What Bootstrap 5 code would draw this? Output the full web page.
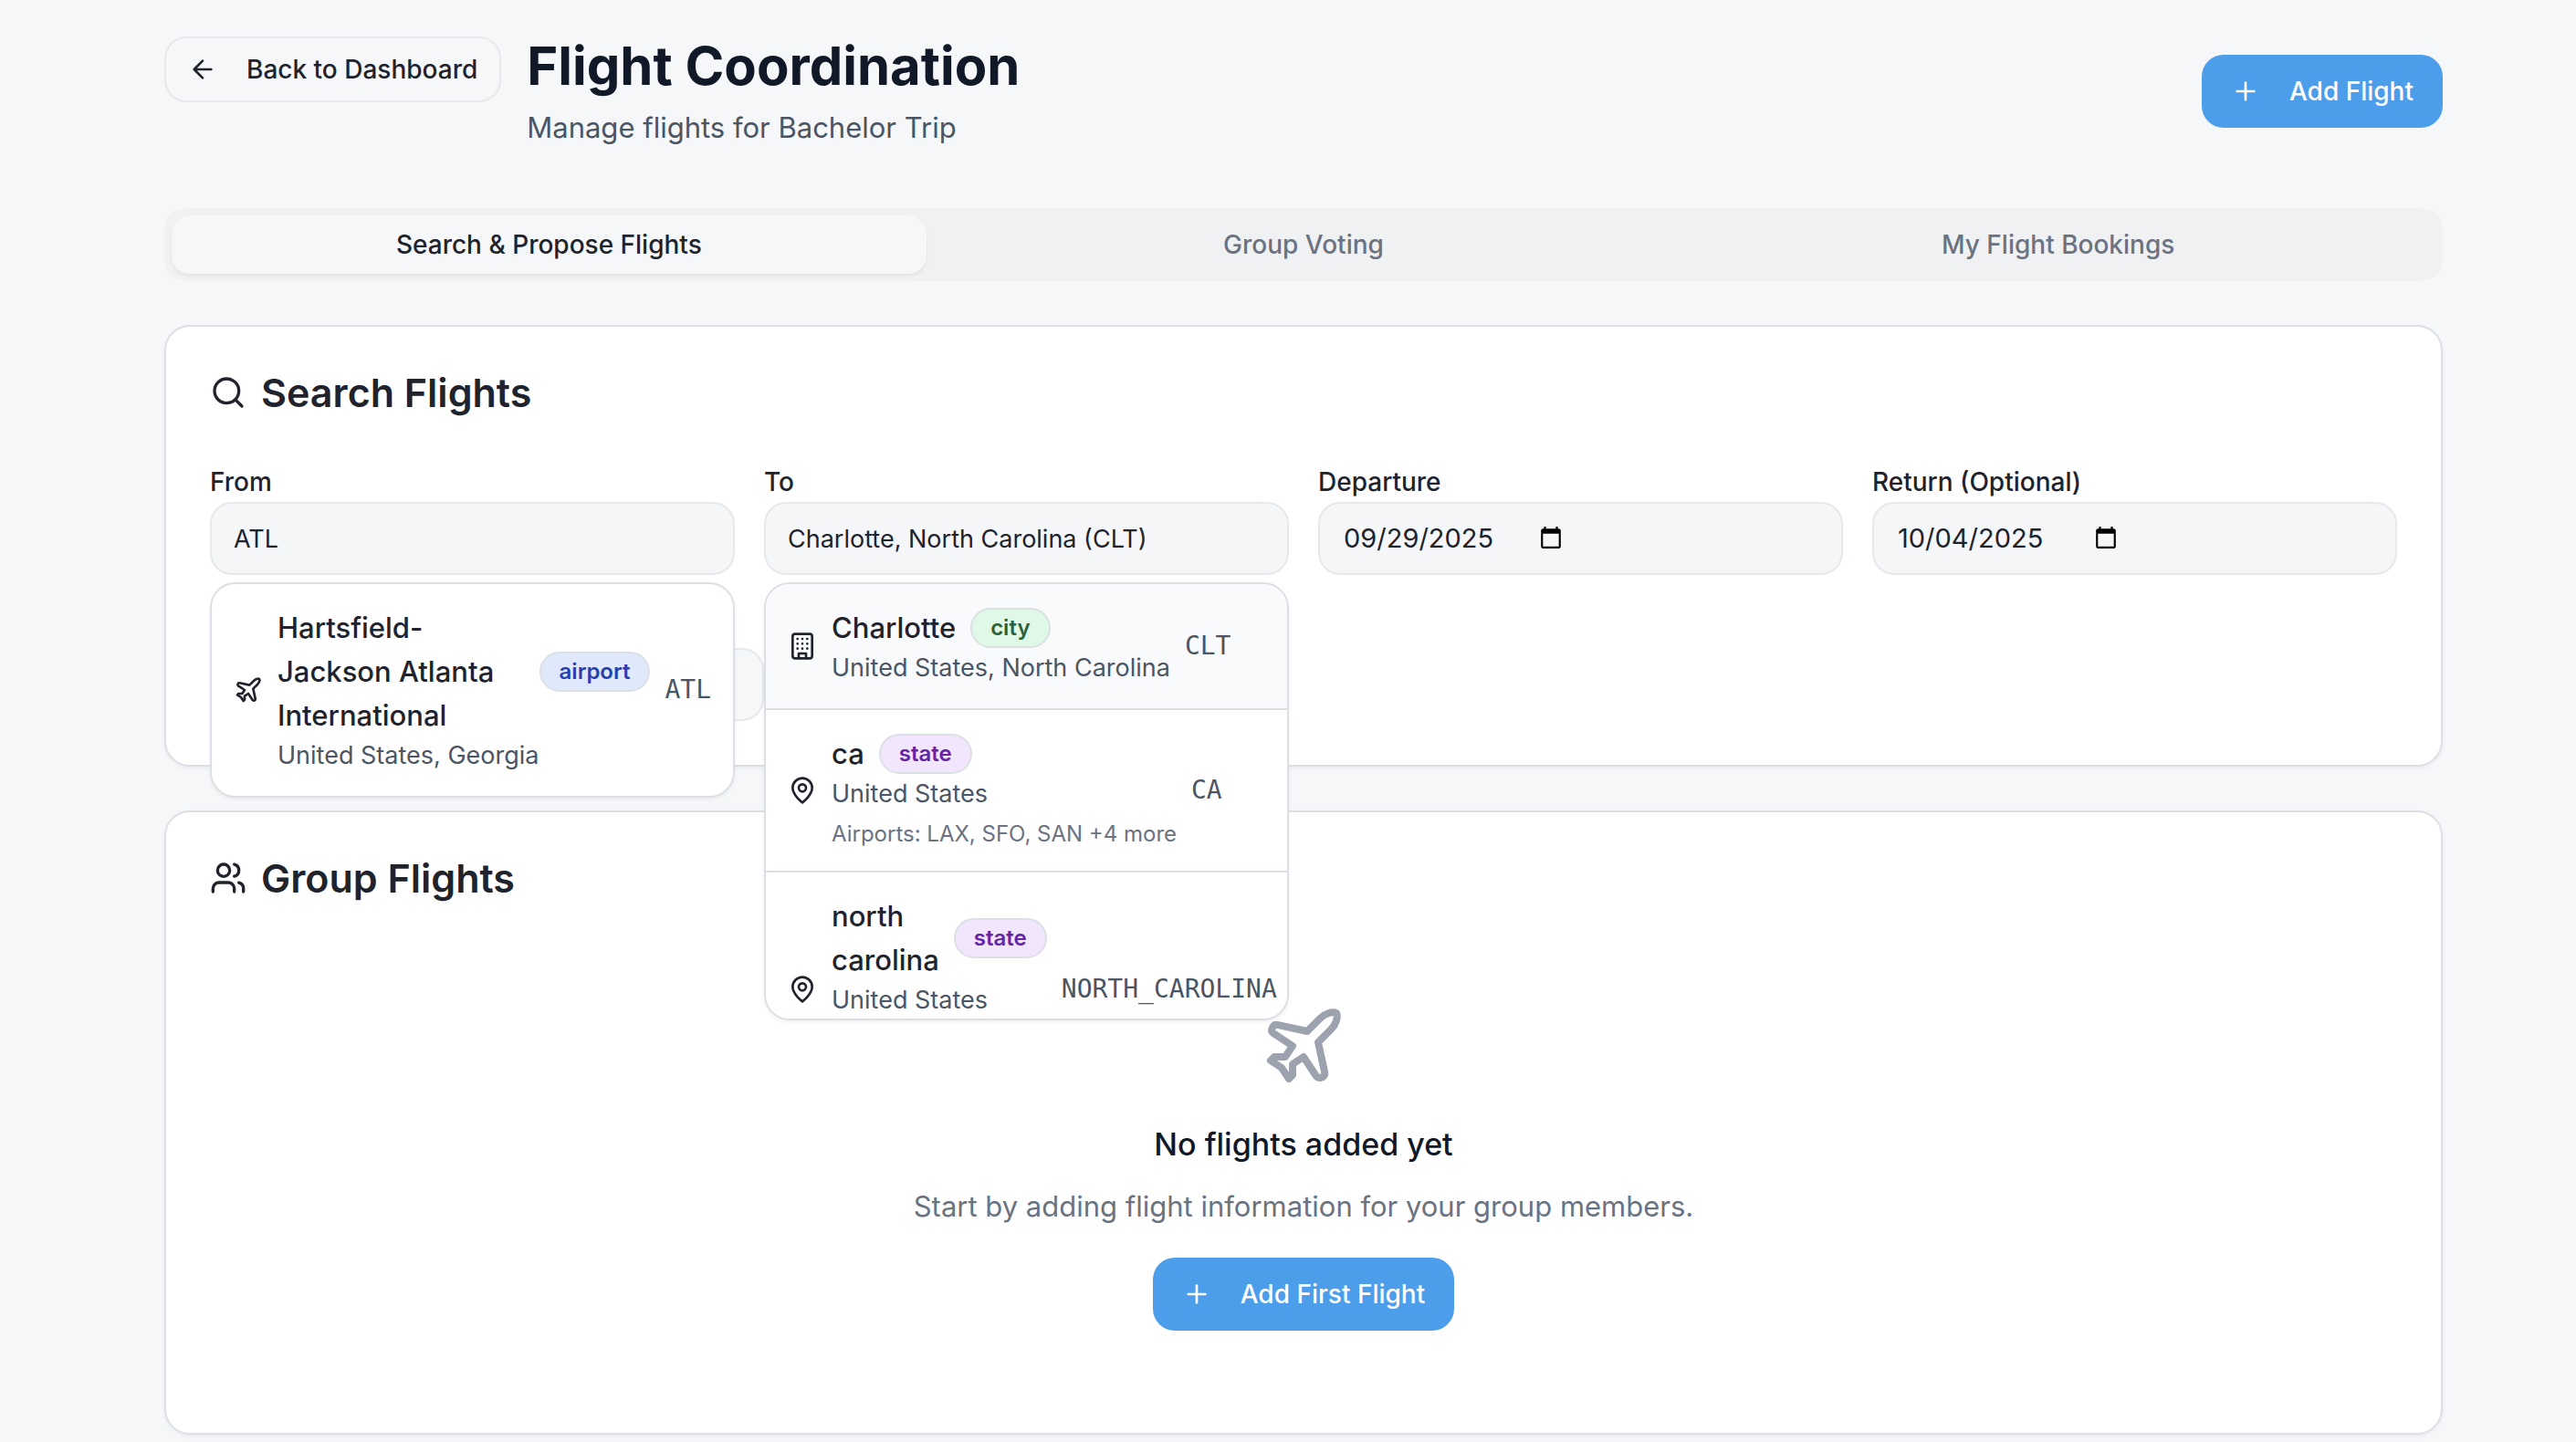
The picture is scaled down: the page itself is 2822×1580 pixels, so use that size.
<!DOCTYPE html>
<html lang="en">
<head>
<meta charset="utf-8">
<meta name="viewport" content="width=device-width, initial-scale=1">
<title>Flight Coordination</title>
<link href="https://cdn.jsdelivr.net/npm/bootstrap@5.3.0/dist/css/bootstrap.min.css" rel="stylesheet">
<style>
  :root { --line: #dcdfe5; --line-soft: #e6e8eb; --page: #f5f7f9; --ink: #20232c; --ink-strong: #111827; --ink-mid: #4b5563; --ink-soft: #6b7280; --brand: #4c9dea; }
  body { font-family: Inter, "Liberation Sans", sans-serif; font-size: 31px; line-height: 48px; color: var(--ink); background: var(--page); }
  .page { padding: 36px 146px 8px 180px; }
  .stack { gap: 48px; }
  .icon { width: 32px; height: 32px; flex: none; fill: none; stroke: currentColor; stroke-width: 2; stroke-linecap: round; stroke-linejoin: round; }
  .icon-md { width: 40px; height: 40px; }
  .icon-xl { width: 96px; height: 96px; color: #9ca3af; }
  .action { display: inline-flex; align-items: center; justify-content: center; gap: 32px; height: 80px; padding: 0 32px; font-size: 28px; font-weight: 500; line-height: 40px; border-radius: 24px; border: 0; white-space: nowrap; }
  .action-main, .action-main:hover { background: var(--brand); color: #fff; }
  .action-line { background: var(--page); color: var(--ink); border: 2px solid var(--line-soft); }
  .action-sm { height: 72px; padding: 0 24px; margin-top: 4px; }
  .action-find { width: calc(25% + 8px); margin-top: 80px; }
  .page-title { font-size: 58px; line-height: 72px; font-weight: 700; color: var(--ink-strong); }
  .head-gap { gap: 28px; }
  .header-wrap { margin-bottom: 64px; }
  .page-sub { color: var(--ink-mid); }
  .tabs-bar { background: #f0f1f3; border-radius: 24px; padding: 8px; }
  .tabs-bar .nav-link { height: 64px; padding: 0; border: 0; background: transparent; font-size: 28px; font-weight: 500; line-height: 64px; color: var(--ink-soft); border-radius: 20px; }
  .tabs-bar .nav-link.active { background: #f6f7f9; color: var(--ink); box-shadow: 0 2px 4px rgba(0,0,0,.06); }
  .panel { background: #fff; border: 2px solid var(--line); border-radius: 28px; padding: 48px; box-shadow: 0 2px 4px rgba(0,0,0,.05); }
  .panel-title { font-size: 43px; line-height: 48px; font-weight: 600; gap: 16px; margin-bottom: 48px; }
  .fields { --bs-gutter-x: 32px; --bs-gutter-y: 0; }
  .field-label { display: block; font-size: 28px; font-weight: 500; line-height: 44px; padding-top: 4px; }
  .field-box.form-control { height: 80px; padding: 0 24px; font-size: 27px; line-height: 40px; color: var(--ink); background: #f5f6f8; border: 2px solid var(--line-soft); border-radius: 24px; }
  .field-date.form-control { display: flex; align-items: center; padding: 0 26px; font-size: 29px; }
  .field-date::-webkit-calendar-picker-indicator { width: 28px; height: 28px; margin-left: -5px; padding: 0; color: #000; }
  .field-date::-webkit-datetime-edit { flex: none; }
  .suggest { top: 100%; left: 0; right: 0; margin-top: 8px; max-height: 480px; overflow: hidden; z-index: 10; background: #fff; border: 2px solid var(--line); border-radius: 28px; box-shadow: 0 2px 4px rgba(0,0,0,.06); }
  .option { display: flex; align-items: center; gap: 16px; padding: 24px; border-bottom: 2px solid var(--line); }
  .option:last-child { border-bottom: 0; }
  .option-on { background: #f9fafb; }
  .option-head { display: flex; align-items: center; gap: 16px; font-weight: 500; }
  .option-place { font-size: 27px; line-height: 40px; color: var(--ink-mid); }
  .option-ports { font-size: 24px; line-height: 32px; margin-top: 8px; color: var(--ink-soft); }
  .option-code { font-family: "DejaVu Sans Mono", monospace; font-size: 28px; line-height: 40px; color: var(--ink-mid); }
  .tag { font-size: 24px; line-height: 40px; font-weight: 600; padding: 0 20px; border: 2px solid var(--line); border-radius: 22px; }
  .tag-airport { background: #dfe9fb; color: #2740af; }
  .tag-city { background: #e0f9e6; color: #2b6339; }
  .tag-state { background: #f1e6fc; color: #6425a3; }
  .empty { padding: 64px 0; }
  .empty-title { font-size: 34px; line-height: 56px; font-weight: 500; color: var(--ink-strong); margin: 32px 0 16px; }
  .empty-text { color: var(--ink-soft); margin-bottom: 32px; }
</style>
<script src="https://cdn.jsdelivr.net/npm/bootstrap@5.3.0/dist/js/bootstrap.bundle.min.js"></script>
</head>
<body>
<svg class="d-none" aria-hidden="true">
  <symbol id="plane" viewBox="0 0 24 24"><path d="M17.8 19.2 16 11l3.5-3.5C21 6 21.5 4 21 3c-1-.5-3 0-4.5 1.5L13 8 4.8 6.2c-.5-.1-.9.1-1.1.5l-.3.5c-.2.5-.1 1 .3 1.3L9 12l-2 3H4l-1 1 3 2 2 3 1-1v-3l3-2 3.5 5.3c.3.4.8.5 1.3.4l.5-.2c.4-.3.6-.7.5-1.2z"/></symbol>
  <symbol id="pin" viewBox="0 0 24 24"><path d="M20 10c0 6-8 12-8 12s-8-6-8-12a8 8 0 0 1 16 0Z"/><circle cx="12" cy="10" r="3"/></symbol>
  <symbol id="plus" viewBox="0 0 24 24"><path d="M5 12h14M12 5v14"/></symbol>
</svg>
<main class="page container-fluid d-flex flex-column">
  <header class="header-wrap d-flex justify-content-between align-items-center">
    <div class="d-flex align-items-start head-gap">
      <button type="button" class="btn action action-line action-sm">
        <svg class="icon" viewBox="0 0 24 24"><path d="m12 19-7-7 7-7M19 12H5"/></svg>Back to Dashboard
      </button>
      <div>
        <h1 class="page-title mb-2">Flight Coordination</h1>
        <p class="page-sub mb-0">Manage flights for Bachelor Trip</p>
      </div>
    </div>
    <button type="button" class="btn action action-main"><svg class="icon"><use href="#plus"/></svg>Add Flight</button>
  </header>

  <div class="d-flex flex-column stack">
    <div class="tabs-bar nav nav-fill nav-justified" role="tablist">
      <button type="button" class="nav-link nav-item active" role="tab" aria-selected="true">Search &amp; Propose Flights</button>
      <button type="button" class="nav-link nav-item" role="tab" aria-selected="false">Group Voting</button>
      <button type="button" class="nav-link nav-item" role="tab" aria-selected="false">My Flight Bookings</button>
    </div>

    <section class="panel">
      <h2 class="panel-title d-flex align-items-center">
        <svg class="icon icon-md" viewBox="0 0 24 24"><circle cx="11" cy="11" r="8"/><path d="m21 21-4.3-4.3"/></svg>Search Flights
      </h2>
      <div class="row fields">
        <div class="col-3">
          <label class="field-label" for="from">From</label>
          <div class="position-relative">
            <input class="form-control field-box" id="from" type="text" value="ATL">
            <div class="suggest position-absolute" role="listbox">
              <div class="option" role="option">
                <svg class="icon"><use href="#plane"/></svg>
                <div>
                  <div class="option-head"><span>Hartsfield-Jackson Atlanta International</span><span class="tag tag-airport">airport</span></div>
                  <div class="option-place">United States, Georgia</div>
                </div>
                <div class="option-code">ATL</div>
              </div>
            </div>
          </div>
        </div>
        <div class="col-3">
          <label class="field-label" for="to">To</label>
          <div class="position-relative">
            <input class="form-control field-box" id="to" type="text" value="Charlotte, North Carolina (CLT)">
            <div class="suggest position-absolute" role="listbox">
              <div class="option option-on" role="option">
                <svg class="icon" viewBox="0 0 24 24"><rect x="4" y="2" width="16" height="20" rx="2"/><path d="M9 22v-4h6v4M8 6h.01M16 6h.01M12 6h.01M12 10h.01M12 14h.01M16 10h.01M16 14h.01M8 10h.01M8 14h.01"/></svg>
                <div>
                  <div class="option-head"><span>Charlotte</span><span class="tag tag-city">city</span></div>
                  <div class="option-place">United States, North Carolina</div>
                </div>
                <div class="option-code">CLT</div>
              </div>
              <div class="option" role="option">
                <svg class="icon"><use href="#pin"/></svg>
                <div>
                  <div class="option-head"><span>ca</span><span class="tag tag-state">state</span></div>
                  <div class="option-place">United States</div>
                  <div class="option-ports">Airports: LAX, SFO, SAN +4 more</div>
                </div>
                <div class="option-code">CA</div>
              </div>
              <div class="option" role="option">
                <svg class="icon"><use href="#pin"/></svg>
                <div>
                  <div class="option-head"><span>north carolina</span><span class="tag tag-state">state</span></div>
                  <div class="option-place">United States</div>
                  <div class="option-ports">Airports: CLT, RDU, GSO</div>
                </div>
                <div class="option-code">NORTH_CAROLINA</div>
              </div>
            </div>
          </div>
        </div>
        <div class="col-3">
          <label class="field-label" for="departure">Departure</label>
          <input class="form-control field-box field-date" id="departure" type="date" value="2025-09-29">
        </div>
        <div class="col-3">
          <label class="field-label" for="return">Return (Optional)</label>
          <input class="form-control field-box field-date" id="return" type="date" value="2025-10-04">
        </div>
      </div>
      <button type="button" class="btn action action-line action-find" aria-label="Search flights">
        <svg class="icon" viewBox="0 0 24 24"><circle cx="11" cy="11" r="8"/><path d="m21 21-4.3-4.3"/></svg>
      </button>
    </section>

    <section class="panel">
      <h2 class="panel-title d-flex align-items-center">
        <svg class="icon icon-md" viewBox="0 0 24 24"><path d="M16 21v-2a4 4 0 0 0-4-4H6a4 4 0 0 0-4 4v2"/><circle cx="9" cy="7" r="4"/><path d="M22 21v-2a4 4 0 0 0-3-3.87M16 3.13a4 4 0 0 1 0 7.75"/></svg>Group Flights
      </h2>
      <div class="empty d-flex flex-column align-items-center text-center">
        <svg class="icon icon-xl"><use href="#plane"/></svg>
        <h3 class="empty-title">No flights added yet</h3>
        <p class="empty-text">Start by adding flight information for your group members.</p>
        <button type="button" class="btn action action-main"><svg class="icon"><use href="#plus"/></svg>Add First Flight</button>
      </div>
    </section>
  </div>
</main>
</body>
</html>
